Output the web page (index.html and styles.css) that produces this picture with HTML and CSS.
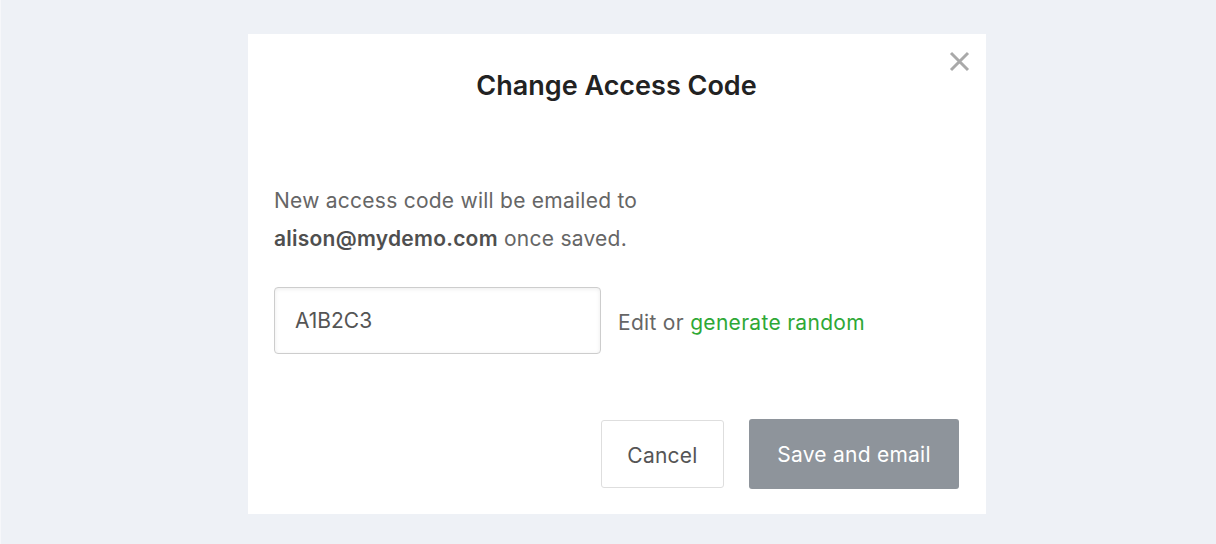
FILE: index.html
```html
<!DOCTYPE html>
<html lang="en">
<head>
<meta charset="utf-8">
<title>Change Access Code</title>
<link rel="stylesheet" href="styles.css">
</head>
<body>
<div class="dialog">
  <button class="close" aria-label="Close">
    <svg width="21" height="21" viewBox="0 0 21 21"><path d="M2 2L19 19M19 2L2 19" stroke="#a9a9a9" stroke-width="3" fill="none"/></svg>
  </button>
  <h1 class="title">Change Access Code</h1>
  <p class="intro">New access code will be emailed to<br><strong>alison@mydemo.com</strong> once saved.</p>
  <div class="code-row">
    <input class="code-input" type="text" value="A1B2C3">
    <span class="hint">Edit or <a class="link" href="#">generate random</a></span>
  </div>
  <div class="actions">
    <button class="btn btn-cancel">Cancel</button>
    <button class="btn btn-save">Save and email</button>
  </div>
</div>
</body>
</html>
```
FILE: styles.css
```css
* { box-sizing: border-box; }
html, body { margin: 0; padding: 0; }
body {
  background: #eef1f6;
  font-family: Inter, "Noto Sans", Arial, sans-serif;
  width: 1216px;
  height: 544px;
  padding: 34px 0 0 248px;
  border-left: 1px solid #f6f7fa;
}
.dialog {
  position: relative;
  margin-left: -1px;
  width: 738px;
  height: 480px;
  background: #fff;
  padding: 35px 27px 25px 26px;
  display: flex;
  flex-direction: column;
}
.close {
  position: absolute;
  top: 17px;
  right: 16px;
  width: 21px;
  height: 21px;
  padding: 0;
  border: 0;
  background: none;
  display: block;
}
.close svg { display: block; }
.title {
  margin: 0;
  font-size: 27px;
  line-height: 34px;
  font-weight: 600;
  color: #222;
  text-align: center;
}
.intro {
  margin: 79px 0 0;
  font-size: 21px;
  line-height: 38px;
  letter-spacing: 0.25px;
  color: #666;
}
.intro strong {
  font-weight: 600;
  color: #4f4f4f;
}
.code-row {
  margin-top: 29px;
  display: flex;
  align-items: center;
  gap: 17px;
}
.code-input {
  width: 327px;
  height: 67px;
  border: 1px solid #cdcdcd;
  border-radius: 4px;
  box-shadow: inset 0 1px 4px rgba(0,0,0,0.08);
  padding: 0 0 0 20px;
  font-family: inherit;
  font-size: 21px;
  color: #555;
  outline: none;
}
.hint {
  font-size: 21px;
  letter-spacing: 0.3px;
  color: #666;
  padding-top: 4px;
}
.link {
  color: #2ea836;
  text-decoration: none;
}
.actions {
  margin-top: auto;
  display: flex;
  justify-content: flex-end;
  align-items: center;
  gap: 25px;
}
.btn {
  font-family: inherit;
  font-size: 21px;
  letter-spacing: 0.25px;
  border-radius: 3px;
  cursor: pointer;
}
.btn-cancel {
  width: 123px;
  height: 68px;
  background: #fff;
  border: 1px solid #dedede;
  color: #555;
  padding-top: 4px;
}
.btn-save {
  width: 210px;
  height: 70px;
  background: #8e949b;
  border: 0;
  color: #fff;
}
```
